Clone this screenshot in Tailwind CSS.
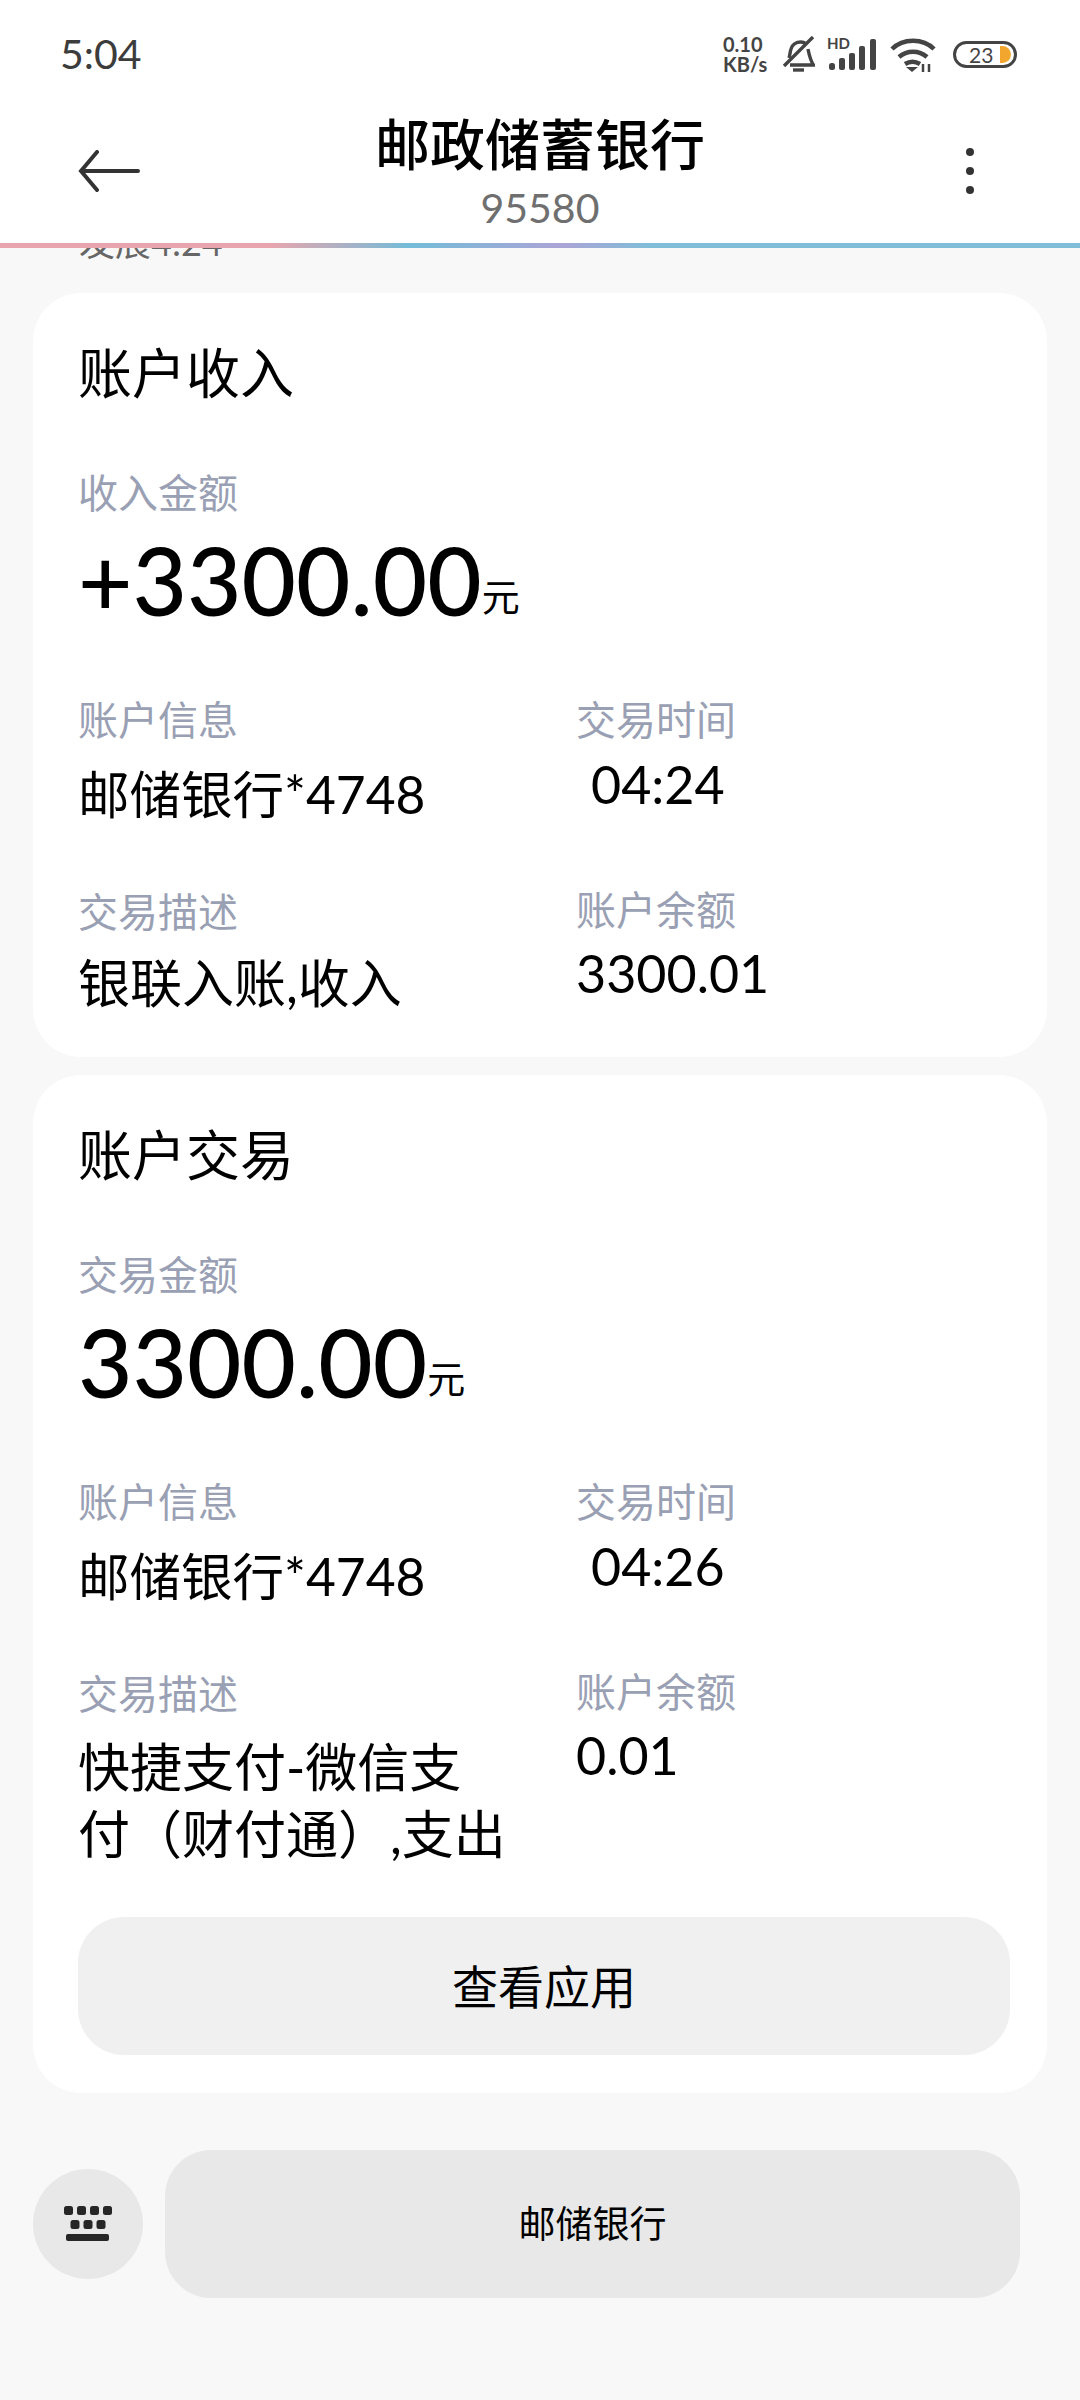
<!DOCTYPE html>
<html lang="zh"><head><meta charset="utf-8">
<script src="https://cdn.jsdelivr.net/npm/@tailwindcss/browser@4"></script>
</head>
<body class="m-0 bg-[#f8f8f8] font-['Lato','Noto_Sans_CJK_SC',sans-serif] text-black">
<div class="w-[1080px] h-[2400px] relative overflow-hidden bg-[#f8f8f8]">
  <header class="relative z-10 bg-white h-[248px]">
    <div class="h-[104px] flex items-center justify-between pl-[60px] pr-[63px] pt-[4px]">
      <span class="text-[41px] text-[#3c3c3c]">5:04</span>
      <div class="flex items-center text-[#444]">
        <div class="text-[20px] leading-[20px] font-bold w-[47px] mr-[12px]">0.10<br>KB/s</div>
        <svg class="mr-[12px]" width="33" height="36" viewBox="0 0 33 36" fill="none" stroke="#444" stroke-width="3.400"><path d="M7 22c1-3 1-6 2-9 1-4 5-7 10-7 2 0 4 1 5.500 2M26 13c1 5 2 11 5.500 16H8"/><path d="M2 30L31 1"/><path d="M11 34h11"/></svg>
        <div class="relative mr-[13px] w-[50px] h-[33px]">
          <span class="absolute left-0 -top-[2px] text-[15px] leading-[15px] font-bold">HD</span>
          <svg width="50" height="33" viewBox="0 0 50 33" fill="#444"><rect x="2" y="25" width="6" height="7" rx="2.500"/><rect x="12" y="20" width="6" height="12" rx="2"/><rect x="22" y="15" width="6" height="17" rx="2"/><rect x="32" y="8" width="6" height="24" rx="2"/><rect x="43" y="1" width="6" height="31" rx="2"/></svg>
        </div>
        <svg class="mr-[17px]" width="46" height="35" viewBox="0 0 46 35" fill="none" stroke="#444" stroke-width="4.500"><path d="M2 12C13 1 33 1 44 12M9 20c8-7 20-7 28 0M15 27c5-3 10-3 15 0"/><path d="M22 35l-6-5h12z" fill="#444" stroke="none"/><path d="M33 27v8M39 27v8" stroke-width="2.500"/></svg>
        <div class="w-[64px] h-[27px] rounded-full border-[3px] border-[#444] flex items-center pl-[13px] text-[21px] leading-none relative overflow-hidden">23<span class="absolute right-[3px] top-[2px] w-[11px] h-[17px] rounded-r-full bg-[#f2a62d]"></span></div>
      </div>
    </div>
    <div class="grid grid-cols-[1fr_auto_1fr] items-start px-[78px]">
      <svg class="mt-[46px]" width="62" height="42" viewBox="0 0 62 42" fill="none" stroke="#333" stroke-width="4" stroke-linecap="round"><path d="M60 21H3M19 2L3 21l16 19"/></svg>
      <div class="text-center pt-[5px]">
        <div class="text-[55px] leading-[70px] font-medium">邮政储蓄银行</div>
        <div class="text-[41px] leading-[44px] text-[#6f6f6f] mt-[7px]">95580</div>
      </div>
      <div class="flex flex-col gap-[11px] mt-[44px] mr-[28px] justify-self-end"><i class="w-[8px] h-[8px] rounded-full bg-[#333]"></i><i class="w-[8px] h-[8px] rounded-full bg-[#333]"></i><i class="w-[8px] h-[8px] rounded-full bg-[#333]"></i></div>
    </div>
    <div class="absolute left-0 bottom-0 w-full h-[5px] bg-[linear-gradient(90deg,#e8a5ae_0%,#e8a5ae_25%,#73bcd8_38%,#aba4d6_52%,#80bdd8_60%,#80bdd8_100%)]"></div>
  </header>

  <div class="absolute left-[79px] top-[222px] text-[36px] leading-[40px] text-[#666]">发展4:24</div>

  <main class="px-[33px] pt-[45px] flex flex-col gap-[18px]">
    <section class="bg-white rounded-[48px] h-[764px] pl-[45px] pr-[30px] pt-[46px]">
      <h2 class="text-[54px] leading-[70px] font-normal">账户收入</h2>
      <div class="text-[40px] leading-[52px] text-[#9aa0b4] mt-[58px]">收入金额</div>
      <div class="leading-[94px] mt-[14px] font-medium"><span class="text-[94px]">+3300.00</span><span class="text-[38px] font-normal align-[5px]">元</span></div>
      <div class="grid grid-cols-[498px_1fr] mt-[37px]">
        <div>
          <div class="text-[40px] leading-[52px] text-[#9aa0b4]">账户信息</div>
          <div class="text-[51.500px] leading-[66px] mt-[15px]">邮储银行*4748</div>
        </div>
        <div>
          <div class="text-[40px] leading-[52px] text-[#9aa0b4]">交易时间</div>
          <div class="text-[52px] leading-[66px] mt-[5px] pl-[15px]">04:24</div>
        </div>
        <div class="mt-[59px]">
          <div class="text-[40px] leading-[52px] text-[#9aa0b4]">交易描述</div>
          <div class="text-[52px] leading-[66px] mt-[12px]">银联入账,收入</div>
        </div>
        <div class="mt-[57px]">
          <div class="text-[40px] leading-[52px] text-[#9aa0b4]">账户余额</div>
          <div class="text-[52px] leading-[66px] mt-[4px]">3300.01</div>
        </div>
      </div>
    </section>

    <section class="bg-white rounded-[48px] h-[1018px] pl-[45px] pr-[37px] pt-[46px]">
      <h2 class="text-[54px] leading-[70px] font-normal">账户交易</h2>
      <div class="text-[40px] leading-[52px] text-[#9aa0b4] mt-[58px]">交易金额</div>
      <div class="leading-[94px] mt-[14px] font-medium"><span class="text-[94px]">3300.00</span><span class="text-[38px] font-normal align-[5px]">元</span></div>
      <div class="grid grid-cols-[498px_1fr] mt-[37px]">
        <div>
          <div class="text-[40px] leading-[52px] text-[#9aa0b4]">账户信息</div>
          <div class="text-[51.500px] leading-[66px] mt-[15px]">邮储银行*4748</div>
        </div>
        <div>
          <div class="text-[40px] leading-[52px] text-[#9aa0b4]">交易时间</div>
          <div class="text-[52px] leading-[66px] mt-[5px] pl-[15px]">04:26</div>
        </div>
        <div class="mt-[59px]">
          <div class="text-[40px] leading-[52px] text-[#9aa0b4]">交易描述</div>
          <div class="text-[52px] leading-[67px] mt-[14px]">快捷支付-微信支<br>付（财付通）,支出</div>
        </div>
        <div class="mt-[57px]">
          <div class="text-[40px] leading-[52px] text-[#9aa0b4]">账户余额</div>
          <div class="text-[52px] leading-[66px] mt-[4px]">0.01</div>
        </div>
      </div>
      <div class="mt-[49px] h-[138px] rounded-[46px] bg-[#f0f0f0] flex items-center justify-center text-[46px]">查看应用</div>
    </section>

    <div class="flex items-center gap-[22px] mt-[39px]">
      <div class="w-[110px] h-[110px] rounded-full bg-[#e8e8e8] flex items-center justify-center">
        <svg width="48" height="36" viewBox="0 0 48 36" fill="#262626"><rect x="0" y="0" width="9" height="9" rx="2.500"/><rect x="13" y="0" width="9" height="9" rx="2.500"/><rect x="26" y="0" width="9" height="9" rx="2.500"/><rect x="39" y="0" width="9" height="9" rx="2.500"/><rect x="6.500" y="14" width="9" height="9" rx="2.500"/><rect x="19.500" y="14" width="9" height="9" rx="2.500"/><rect x="32.500" y="14" width="9" height="9" rx="2.500"/><rect x="2" y="28" width="43" height="7" rx="2"/></svg>
      </div>
      <div class="w-[855px] h-[148px] rounded-[46px] bg-[#e8e8e8] flex items-center justify-center text-[37px]">邮储银行</div>
    </div>
  </main>
</div>
</body></html>
